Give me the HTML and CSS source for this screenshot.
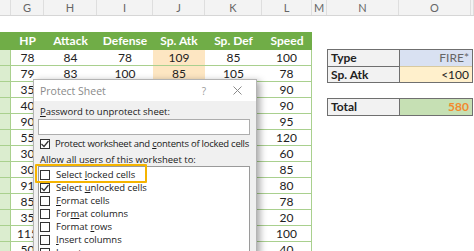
FILE: index.html
```html
<!DOCTYPE html>
<html lang="en">
<head>
  <meta charset="UTF-8">
  <title>Protect Sheet</title>
  <link rel="stylesheet" href="styles.css">
</head>
<body>

<div class="sheet">
  <!-- Column letters -->
  <div class="colhead">
    <span></span><span>G</span><span>H</span><span>I</span><span>J</span><span>K</span><span>L</span><span>M</span><span>N</span><span>O</span><span></span>
  </div>

  <div class="grid-area">
    <!-- Stats table -->
    <div class="stats">
      <div class="row hdr">
        <span></span><span>HP</span><span>Attack</span><span>Defense</span><span>Sp. Atk</span><span>Sp. Def</span><span>Speed</span>
      </div>
      <div class="row"><span></span><span>78</span><span>84</span><span>78</span><span>109</span><span>85</span><span>100</span></div>
      <div class="row"><span></span><span>79</span><span>83</span><span>100</span><span>85</span><span>105</span><span>78</span></div>
      <div class="row"><span></span><span>35</span><span>55</span><span>40</span><span>50</span><span>50</span><span>90</span></div>
      <div class="row"><span></span><span>40</span><span>45</span><span>40</span><span>35</span><span>35</span><span>90</span></div>
      <div class="row"><span></span><span>90</span><span>110</span><span>80</span><span>100</span><span>80</span><span>95</span></div>
      <div class="row"><span></span><span>55</span><span>90</span><span>80</span><span>50</span><span>105</span><span>120</span></div>
      <div class="row"><span></span><span>30</span><span>56</span><span>35</span><span>25</span><span>35</span><span>60</span></div>
      <div class="row"><span></span><span>30</span><span>60</span><span>55</span><span>40</span><span>40</span><span>85</span></div>
      <div class="row"><span></span><span>91</span><span>134</span><span>95</span><span>100</span><span>100</span><span>80</span></div>
      <div class="row"><span></span><span>85</span><span>73</span><span>70</span><span>73</span><span>115</span><span>78</span></div>
      <div class="row"><span></span><span>35</span><span>45</span><span>160</span><span>30</span><span>45</span><span>20</span></div>
      <div class="row"><span></span><span>115</span><span>45</span><span>20</span><span>45</span><span>25</span><span>100</span></div>
      <div class="row"><span></span><span>50</span><span>65</span><span>64</span><span>44</span><span>48</span><span>40</span></div>
    </div>

    <!-- Criteria and total -->
    <div class="side">
      <div class="mini">
        <span class="lbl">Type</span><span class="val type">FIRE*</span>
        <span class="lbl">Sp. Atk</span><span class="val atk">&lt;100</span>
      </div>
      <div class="mini total">
        <span class="lbl">Total</span><span class="val sum">580</span>
      </div>
    </div>
  </div>

  <!-- Protect Sheet dialog -->
  <div class="dialog">
    <div class="titlebar">
      <span class="title">Protect Sheet</span>
      <span class="help">?</span>
      <svg class="close" width="9" height="9" viewBox="0 0 9 9"><path d="M0.5 0.5L8.5 8.5M8.5 0.5L0.5 8.5" stroke="#8a8a8a" stroke-width="1"/></svg>
    </div>
    <div class="dlg-body">
      <div class="line"><u>P</u>assword to unprotect sheet:</div>
      <div class="pwd"></div>
      <div class="line check">
        <span class="box on"><svg width="10" height="10" viewBox="0 0 10 10"><path d="M1.5 5L4 7.5L8.5 2" fill="none" stroke="#333" stroke-width="1.2"/></svg></span>
        <span>Protect worksheet and <u>c</u>ontents of locked cells</span>
      </div>
      <div class="line allow">Allow all users of this worksheet to:</div>
      <div class="listbox">
        <div class="item hl"><span class="box"></span><span>Select <u>l</u>ocked cells</span></div>
        <div class="item"><span class="box on"><svg width="10" height="10" viewBox="0 0 10 10"><path d="M1.5 5L4 7.5L8.5 2" fill="none" stroke="#333" stroke-width="1.2"/></svg></span><span>Select <u>u</u>nlocked cells</span></div>
        <div class="item"><span class="box"></span><span><u>F</u>ormat cells</span></div>
        <div class="item"><span class="box"></span><span>For<u>m</u>at columns</span></div>
        <div class="item"><span class="box"></span><span>Format <u>r</u>ows</span></div>
        <div class="item"><span class="box"></span><span><u>I</u>nsert columns</span></div>
        <div class="item"><span class="box"></span><span>Insert ro<u>w</u>s</span></div>
      </div>
    </div>
  </div>
</div>

</body>
</html>
```

FILE: styles.css
```css
/* Sheet */
body {
  margin: 0;
  background: #fff;
}
.sheet {
  position: relative;
  width: 474px;
  height: 251px;
  overflow: hidden;
  font-family: Lato, "Liberation Sans", sans-serif;
  color: #222;
}
.colhead {
  display: grid;
  grid-template-columns: 11px 33px 53px 56px 52px 57px 50px 15px 72px 72px 1fr;
  height: 16px;
  background: #f3f3f3;
  border-bottom: 1px solid #d6d6d6;
  box-sizing: border-box;
  font-size: 11px;
  color: #666;
}
.colhead span {
  text-align: center;
  line-height: 15px;
  border-right: 1px solid #dedede;
}
.grid-area {
  display: flex;
  align-items: flex-start;
  gap: 15px;
  padding-top: 16px;
}

/* Stats table */
.stats {
  width: 312px;
}
.row {
  display: grid;
  grid-template-columns: 11px 33px 53px 56px 52px 57px 50px;
  height: 16px;
  box-sizing: border-box;
  border-bottom: 1px solid #a9d08e;
  font-size: 12px;
  line-height: 15px;
}
.row span {
  text-align: center;
}
.row span:first-child {
  background: #dbedcf;
  border-right: 1px solid #a9d08e;
}
.row span:nth-child(5) {
  background: #fde6c2;
}
.row span:last-child {
  border-right: 1px solid #a9d08e;
}
.row.hdr {
  height: 18px;
  background: #70ad47;
  color: #fff;
  font-weight: bold;
  border-bottom: none;
  line-height: 18px;
}
.row.hdr span {
  background: none;
  border: none;
}

/* Criteria boxes */
.side {
  margin-top: 17px;
}
.mini {
  display: grid;
  grid-template-columns: 72px 72px;
  grid-auto-rows: 16px;
  border: 1px solid #6f6f6f;
  font-size: 12px;
  line-height: 15px;
}
.mini span {
  padding: 0 3px;
}
.mini .lbl {
  background: #f2f2f2;
  font-weight: bold;
  border-right: 1px solid #6f6f6f;
}
.mini .lbl:nth-child(3) {
  border-top: 1px solid #6f6f6f;
}
.mini .val {
  text-align: right;
}
.mini .type {
  background: #d9e1f2;
  color: #666;
}
.mini .atk {
  background: #fff0cc;
  border-top: 1px solid #d8c9a0;
}
.mini.total {
  margin-top: 15px;
}
.mini .sum {
  background: #c6e0b4;
  color: #f28a2e;
  font-weight: bold;
}

/* Dialog */
.dialog {
  position: absolute;
  left: 33px;
  top: 79px;
  width: 222px;
  height: 190px;
  background: #f0f0f0;
  border: 1px solid #b4b4b4;
  box-shadow: 3px 2px 7px rgba(0, 0, 0, 0.35);
  font-family: "Open Sans", "Noto Sans", sans-serif;
  font-size: 9.5px;
  color: #1a1a1a;
}
.titlebar {
  display: flex;
  align-items: center;
  height: 21px;
  background: #fff;
  padding-left: 6px;
}
.title {
  color: #8a8a8a;
  font-size: 10.5px;
  flex: 1;
}
.help {
  color: #9a9a9a;
  font-size: 10px;
  margin-right: 27px;
}
.close {
  margin-right: 14px;
}
.dlg-body {
  padding: 0 4px;
}
.line {
  height: 12px;
  line-height: 12px;
  margin-top: 5px;
  padding-left: 2px;
}
.pwd {
  height: 16px;
  width: 212px;
  box-sizing: border-box;
  margin-top: 1px;
  background: #fff;
  border: 1px solid #adadad;
}
.line.check {
  display: flex;
  align-items: center;
  gap: 5px;
  margin-top: 3px;
  white-space: nowrap;
  letter-spacing: -0.25px;
}
.line.allow {
  margin-top: 4px;
}
.listbox {
  width: 212px;
  height: 100px;
  box-sizing: border-box;
  background: #fff;
  border: 1px solid #9a9a9a;
  padding: 1px;
}
.item {
  position: relative;
  display: flex;
  align-items: center;
  gap: 6px;
  height: 13px;
  white-space: nowrap;
}
.item.hl::after {
  content: "";
  position: absolute;
  left: -5px;
  top: -4px;
  width: 108px;
  height: 15px;
  border: 2px solid #f5b400;
  border-radius: 1px;
}
.box {
  display: inline-block;
  width: 10px;
  height: 10px;
  box-sizing: border-box;
  border: 1px solid #333;
  background: #fff;
  position: relative;
  flex: none;
}
.box svg {
  position: absolute;
  left: -1px;
  top: -1px;
}
u {
  text-decoration: underline;
  text-underline-offset: 1px;
}
```
